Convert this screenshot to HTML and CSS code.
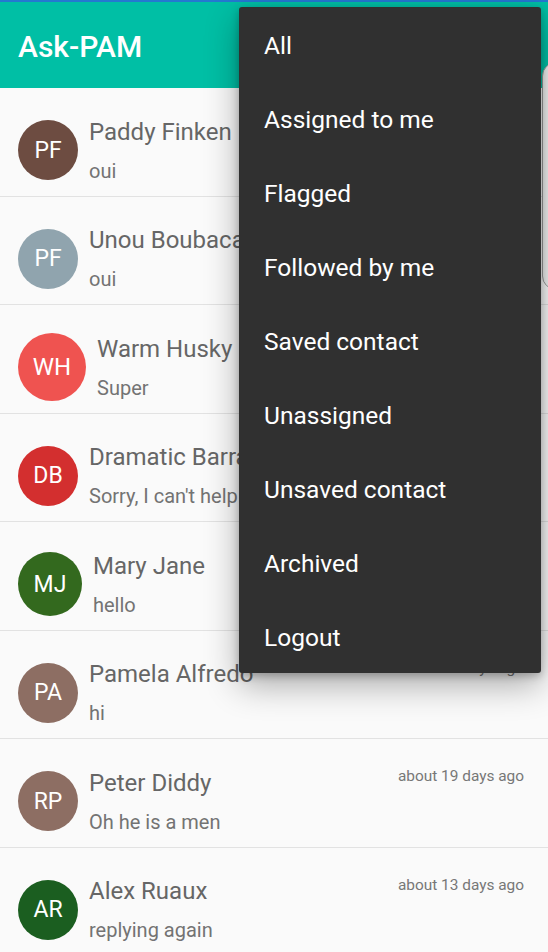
FILE: index.html
```html
<!DOCTYPE html>
<html lang="en">
<head>
<meta charset="utf-8">
<title>Ask-PAM</title>
<link rel="stylesheet" href="styles.css">
</head>
<body>
<div class="status"></div>
<header class="appbar"><h1 class="title">Ask-PAM</h1></header>
<ul class="list">
  <li class="row"><span class="avatar c-brown6">PF</span><div class="text"><div class="name">Paddy Finken</div><div class="msg">oui</div></div></li>
  <li class="row"><span class="avatar c-bluegrey">PF</span><div class="text"><div class="name">Unou Boubacar</div><div class="msg">oui</div></div></li>
  <li class="row"><span class="avatar avatar-lg c-red4">WH</span><div class="text"><div class="name">Warm Husky</div><div class="msg">Super</div></div></li>
  <li class="row"><span class="avatar c-red7">DB</span><div class="text"><div class="name">Dramatic Barracuda</div><div class="msg">Sorry, I can't help you</div></div></li>
  <li class="row"><span class="avatar avatar-md c-lgreen">MJ</span><div class="text"><div class="name">Mary Jane</div><div class="msg">hello</div></div></li>
  <li class="row"><span class="avatar c-brown4">PA</span><div class="text"><div class="name">Pamela Alfredo</div><div class="msg">hi</div></div><span class="time">about 16 days ago</span></li>
  <li class="row"><span class="avatar c-brown4">RP</span><div class="text"><div class="name">Peter Diddy</div><div class="msg">Oh he is a men</div></div><span class="time">about 19 days ago</span></li>
  <li class="row"><span class="avatar c-green9">AR</span><div class="text"><div class="name">Alex Ruaux</div><div class="msg">replying again</div></div><span class="time">about 13 days ago</span></li>
</ul>
<div class="peek"></div>
<nav class="menu">
  <div class="item">All</div>
  <div class="item">Assigned to me</div>
  <div class="item">Flagged</div>
  <div class="item">Followed by me</div>
  <div class="item">Saved contact</div>
  <div class="item">Unassigned</div>
  <div class="item">Unsaved contact</div>
  <div class="item">Archived</div>
  <div class="item">Logout</div>
</nav>
</body>
</html>
```
FILE: styles.css
```css
* { box-sizing: border-box; }
html, body {
  margin: 0;
  padding: 0;
  width: 548px;
  height: 952px;
  overflow: hidden;
  background: #fafafa;
  font-family: Roboto, "Noto Sans", "Liberation Sans", sans-serif;
}
body { position: relative; }
.status {
  height: 2px;
  background: #2479d0;
}
.appbar {
  height: 86px;
  background: #00bfa5;
  display: flex;
  align-items: center;
  padding: 3px 0 0 18px;
}
.title {
  margin: 0;
  color: #fff;
  font-size: 30px;
  font-weight: 500;
  line-height: 36px;
}
.list {
  list-style: none;
  margin: 0;
  padding: 0;
}
.row {
  height: 108.5px;
  display: flex;
  align-items: center;
  padding: 17px 24px 0 18px;
  border-bottom: 1px solid #e2e2e2;
  white-space: nowrap;
}
.avatar {
  flex: none;
  width: 60px;
  height: 60px;
  border-radius: 50%;
  display: flex;
  align-items: center;
  justify-content: center;
  color: #fff;
  font-size: 23px;
  line-height: 1;
}
.avatar-lg { width: 68px; height: 68px; font-size: 24px; }
.avatar-md { width: 64px; height: 64px; }
.c-brown6 { background: #6d4c41; }
.c-bluegrey { background: #90a4ae; }
.c-red4 { background: #ef5350; }
.c-red7 { background: #d32f2f; }
.c-lgreen { background: #33691e; }
.c-brown4 { background: #8d6e63; }
.c-green9 { background: #1b5e20; }
.text {
  flex: 1;
  min-width: 0;
  overflow: hidden;
  margin-left: 11px;
  margin-right: 8px;
  display: flex;
  flex-direction: column;
  gap: 13px;
}
.name {
  font-size: 24px;
  line-height: 28px;
  color: #666;
  overflow: hidden;
}
.msg {
  font-size: 20px;
  line-height: 24px;
  color: #737373;
  overflow: hidden;
}
.time {
  flex: none;
  align-self: flex-start;
  margin-top: 10px;
  font-size: 15.4px;
  line-height: 20px;
  color: #777;
}
.peek {
  position: absolute;
  left: 542px;
  top: 62px;
  width: 30px;
  height: 228px;
  border-radius: 14px;
  background: #f2f2f2;
  border: 1px solid #9a9a9a;
}
.menu {
  position: absolute;
  left: 239px;
  top: 7px;
  width: 302px;
  height: 666px;
  padding-top: 2px;
  background: #303030;
  border-radius: 3px;
  box-shadow: 0 12px 34px rgba(0,0,0,0.32), 0 3px 8px rgba(0,0,0,0.25);
}
.item {
  height: 74px;
  line-height: 74px;
  padding-left: 25px;
  color: #fff;
  font-size: 24.5px;
}
```
